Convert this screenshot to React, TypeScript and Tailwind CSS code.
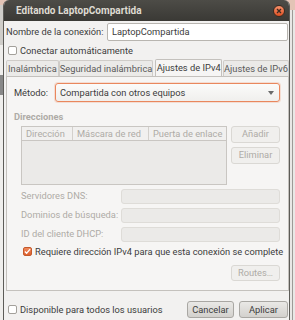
import React from "react";

const font = { fontFamily: 'Roboto, "Liberation Sans", Arial, sans-serif' };

function Btn({ children, disabled, className = "" }: { children: React.ReactNode; disabled?: boolean; className?: string }) {
  return (
    <div
      className={
        "flex items-center justify-center whitespace-nowrap rounded-[3px] border text-[9.3px] " +
        (disabled
          ? "border-[#dad8d4] bg-[#f0efed] text-[#aeaba6] "
          : "border-[#a9a7a3] bg-gradient-to-b from-[#e9e8e6] to-[#d3d1cd] text-[#3c3c3c] ") +
        className
      }
    >
      {children}
    </div>
  );
}

function Check({ checked }: { checked?: boolean }) {
  if (checked)
    return (
      <div className="flex h-[9px] w-[9px] shrink-0 items-center justify-center rounded-[2px] border border-[#c4592b] bg-gradient-to-b from-[#f08a5d] to-[#dd5f2b]">
        <svg width="8" height="7" viewBox="0 0 8 7">
          <path d="M1 3.5 L3 5.5 L7 0.8" fill="none" stroke="#fff" strokeWidth="1.4" />
        </svg>
      </div>
    );
  return <div className="h-[9px] w-[9px] shrink-0 rounded-[2px] border border-[#a3a09b] bg-white" />;
}

export default function App() {
  return (
    <div className="relative flex h-[320px] w-[295px] overflow-hidden whitespace-nowrap bg-[#e3c4b6] text-[9.3px]" style={font}>
      {/* left strip */}
      <div className="mt-[5px] flex w-[3px] flex-col bg-[#d9d7d3]">
        <div className="h-[40px] bg-[#cfcdc9]" />
        <div className="h-[30px] bg-[#efeeec]" />
        <div className="h-[20px] bg-[#888]" />
        <div className="flex-1 bg-[#efeeec]" />
      </div>
      {/* dialog */}
      <div className="flex w-[287px] flex-col overflow-hidden rounded-t-[6px] border-x border-[#5d5c58] bg-[#f2f1f0]">
        <div className="flex h-[21px] shrink-0 items-center justify-between bg-gradient-to-b from-[#4d4c47] to-[#3a3935] pl-[12px] pr-[4px]">
          <span className="text-[10px] font-bold text-[#dfdbd2]">Editando LaptopCompartida</span>
          <div className="flex h-[12px] w-[12px] items-center justify-center rounded-full border border-[#3a2a20] bg-gradient-to-b from-[#f7916a] to-[#dc4f20]">
            <svg width="6" height="6" viewBox="0 0 6 6"><path d="M1 1 L5 5 M5 1 L1 5" stroke="#3b2a22" strokeWidth="1.3" /></svg>
          </div>
        </div>
        {/* name row */}
        <div className="flex h-[21px] items-center pl-[2px] pt-[1px]">
          <span className="w-[101px] text-[#3c3c3c]">Nombre de la conexión:</span>
          <div className="mr-[1px] flex h-[18px] flex-1 items-center rounded-[2px] border border-[#b8b5b0] bg-white pl-[4px] text-[#3c3c3c]">
            LaptopCompartida
          </div>
        </div>
        <div className="flex h-[15px] items-center gap-[3px] pl-[4px] pt-[2px]">
          <Check />
          <span className="text-[#3c3c3c]">Conectar automáticamente</span>
        </div>
        {/* tabs */}
        <div className="mt-[2px] flex h-[17px] items-end pl-[2px]">
          <div className="flex h-[16px] w-[53px] items-center justify-center rounded-t-[2px] border border-b-0 border-[#cfccc8] bg-[#ebeae8] text-[#5a5a5a]">Inalámbrica</div>
          <div className="flex h-[16px] w-[95px] items-center justify-center rounded-t-[2px] border border-b-0 border-[#cfccc8] bg-[#ebeae8] text-[#5a5a5a]">Seguridad inalámbrica</div>
          <div className="ml-[2px] flex h-[17px] w-[67px] items-center justify-center rounded-t-[2px] border border-b-0 border-[#c4c1bd] bg-[#f6f5f4] text-[#3c3c3c]">Ajustes de IPv4</div>
          <div className="ml-[1px] flex h-[16px] w-[66px] items-center justify-center rounded-t-[2px] border border-b-0 border-[#cfccc8] bg-[#ebeae8] text-[#5a5a5a]">Ajustes de IPv6</div>
        </div>
        {/* panel */}
        <div className="ml-[2px] flex h-[215px] flex-col border border-[#c4c1bd] bg-[#f6f5f4]">
          <div className="mt-[6px] flex h-[19px] items-center pl-[7px] pr-[8px]">
            <span className="w-[41px] text-[#3c3c3c]">Método:</span>
            <div className="flex h-[19px] flex-1 items-center justify-between rounded-[3px] border border-[#e9875d] bg-gradient-to-b from-[#fbfbfa] to-[#f0efed] pl-[4px] pr-[5px] text-[#3c3c3c] shadow-[0_0_0_1px_rgba(240,150,110,0.25)]">
              <span>Compartida con otros equipos</span>
              <svg width="6" height="4" viewBox="0 0 6 4"><path d="M0 0 L6 0 L3 4 Z" fill="#6a6a6a" /></svg>
            </div>
          </div>
          <div className="mt-[8px] pl-[7px] font-bold text-[#aeaba6]">Direcciones</div>
          <div className="mt-[2px] flex pl-[14px] pr-[8px]">
            <div className="flex h-[59px] w-[206px] flex-col border border-[#c9c6c2] bg-[#ebeae8]">
              <div className="flex h-[14px] border-b border-[#c9c6c2] bg-[#f1f0ef] text-[#aeaba6]">
                <div className="w-[51px] overflow-hidden border-r border-[#d3d0cc] pl-[4px] leading-[14px]">Dirección</div>
                <div className="w-[76px] overflow-hidden border-r border-[#d3d0cc] pl-[4px] leading-[14px]">Máscara de red</div>
                <div className="flex-1 overflow-hidden pl-[4px] leading-[14px]">Puerta de enlace</div>
              </div>
            </div>
            <div className="ml-[4px] flex flex-1 flex-col gap-[4px]">
              <Btn disabled className="h-[17px]">Añadir</Btn>
              <Btn disabled className="h-[17px]">Eliminar</Btn>
            </div>
          </div>
          <div className="mt-[4px] flex flex-col gap-[4px] pl-[14px] pr-[8px]">
            {["Servidores DNS:", "Dominios de búsqueda:", "ID del cliente DHCP:"].map((l) => (
              <div key={l} className="flex h-[15px] items-center">
                <span className="w-[100px] text-[#aeaba6]">{l}</span>
                <div className="h-[15px] flex-1 rounded-[3px] border border-[#dedcd8] bg-[#ebeae8]" />
              </div>
            ))}
          </div>
          <div className="mt-[5px] flex h-[10px] items-center gap-[3px] pl-[16px]">
            <Check checked />
            <span className="text-[#3c3c3c]">Requiere dirección IPv4 para que esta conexión se complete</span>
          </div>
          <div className="mt-[8px] flex justify-end pr-[8px]">
            <Btn disabled className="h-[16px] w-[49px]">Routes…</Btn>
          </div>
        </div>
        {/* bottom row */}
        <div className="mt-[10px] flex items-center pl-[4px] pr-[1px]">
          <Check />
          <span className="ml-[3px] text-[#3c3c3c]">Disponible para todos los usuarios</span>
          <div className="flex-1" />
          <Btn className="h-[17px] w-[47px]">Cancelar</Btn>
          <Btn className="ml-[5px] h-[17px] w-[49px]">Aplicar</Btn>
        </div>
      </div>
      {/* right strip */}
      <div className="mt-[10px] flex flex-1 flex-col bg-[#e9e8e6]">
        <div className="ml-[2px] h-full w-[1px] bg-[#9d9b97]" />
      </div>
    </div>
  );
}
